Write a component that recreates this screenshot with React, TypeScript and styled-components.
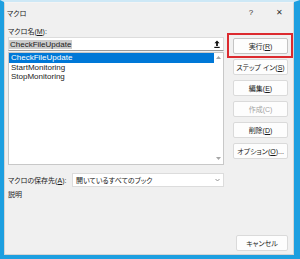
import React from 'react'
import styled, { createGlobalStyle } from 'styled-components'

const GlobalStyle = createGlobalStyle`
    html, body {
        margin: 0;
        padding: 0;
        background: #ffffff;
    }
    body {
        font-family: 'Liberation Sans', 'Noto Sans CJK JP', sans-serif;
        color: #1b1b1b;
    }
`

const Frame = styled.div`
    width: 300px;
    height: 259px;
    box-sizing: border-box;
    border-top: 2px solid #cde8f6;
    border-left: 4px solid #1d9fe0;
    border-right: 6px solid #1d9fe0;
    border-bottom: 4px solid #1d9fe0;
    display: flex;
`

const Dialog = styled.div`
    flex: 1;
    display: flex;
    flex-direction: column;
    background: #f0f0f0;
    border: 1px solid #d4d4d4;
    border-top-color: #f4f4f4;
    font-size: 7px;
    font-feature-settings: 'palt';
`

const TitleBar = styled.div`
    height: 19px;
    display: flex;
    align-items: center;
    padding-left: 2px;
`

const Title = styled.div`
    flex: 1;
`

const TitleButton = styled.div`
    width: 28px;
    height: 19px;
    display: flex;
    align-items: center;
    justify-content: center;
    font-size: 8px;
    color: #333;
`

const Body = styled.div`
    flex: 1;
    display: flex;
    gap: 9px;
    padding: 0 5px 3px 3px;
`

const LeftColumn = styled.div`
    width: 216px;
    display: flex;
    flex-direction: column;
`

const Label = styled.div<{ $top?: number }>`
    height: 10px;
    line-height: 10px;
    margin-top: ${(p) => p.$top ?? 0}px;
    white-space: nowrap;
`

const NameInput = styled.div`
    height: 14px;
    box-sizing: border-box;
    background: #ffffff;
    border: 1px solid #dcdcdc;
    border-bottom-color: #9a9a9a;
    display: flex;
    align-items: center;
    justify-content: space-between;
    padding: 0 3px 0 0;
    font-size: 8px;
`

const Selected = styled.span`
    background: #cccccc;
    padding: 0 1px;
    line-height: 9px;
`

const List = styled.div`
    height: 113px;
    margin-top: 1px;
    box-sizing: border-box;
    background: #ffffff;
    border: 1px solid #c8c8c8;
    display: flex;
    font-size: 8px;
`

const ListItems = styled.div`
    flex: 1;
    display: flex;
    flex-direction: column;
`

const ListItem = styled.div<{ $active?: boolean }>`
    height: 9.5px;
    line-height: 9.5px;
    padding-left: 2px;
    background: ${(p) => (p.$active ? '#0078d7' : 'transparent')};
    color: ${(p) => (p.$active ? '#ffffff' : '#1b1b1b')};
`

const ScrollTrack = styled.div`
    width: 9px;
    display: flex;
    flex-direction: column;
    justify-content: space-between;
    align-items: center;
    padding: 3px 0 4px;
`

const SaveRow = styled.div`
    display: flex;
    align-items: center;
    margin-top: 8px;
    height: 14px;
`

const SaveLabel = styled.div`
    width: 64px;
    white-space: nowrap;
`

const Select = styled.div`
    flex: 1;
    height: 14px;
    box-sizing: border-box;
    background: #ffffff;
    border: 1px solid #dcdcdc;
    display: flex;
    align-items: center;
    padding: 0 3px;
`

const SelectText = styled.div`
    flex: 1;
    white-space: nowrap;
`

const RightColumn = styled.div`
    width: 55px;
    display: flex;
    flex-direction: column;
    gap: 5px;
    padding-top: 16px;
`

const Button = styled.div<{ $primary?: boolean; $disabled?: boolean; $highlight?: boolean }>`
    position: relative;
    height: 16px;
    box-sizing: border-box;
    background: #fdfdfd;
    border: 1px solid ${(p) => (p.$primary ? '#c4c4c4' : '#dadada')};
    border-radius: 2px;
    display: flex;
    align-items: center;
    justify-content: center;
    white-space: nowrap;
    color: ${(p) => (p.$disabled ? '#a3a3a3' : '#1b1b1b')};

    &::after {
        content: '';
        display: ${(p) => (p.$highlight ? 'block' : 'none')};
        position: absolute;
        top: -6px;
        bottom: -5px;
        left: -7px;
        right: -6px;
        border: 2px solid #dc2a2f;
    }
`

const CancelButton = styled(Button)`
    margin-top: auto;
    width: 52px;
    align-self: flex-end;
`

const Arrow = ({ up }: { up?: boolean }) => (
    <svg width="5" height="3" viewBox="0 0 5 3">
        <polygon points={up ? '2.5,0 5,3 0,3' : '0,0 5,0 2.5,3'} fill="#a6a6a6" />
    </svg>
)

const CollapseIcon = () => (
    <svg width="6" height="8" viewBox="0 0 6 8">
        <path d="M3 0.5 L5.6 3.3 H3.9 V6 H2.1 V3.3 H0.4 Z" fill="#111" />
        <rect x="0.3" y="6.8" width="5.4" height="1.2" fill="#111" />
    </svg>
)

const Chevron = () => (
    <svg width="5" height="4" viewBox="0 0 5 4">
        <path d="M0.5 1 L2.5 3 L4.5 1" stroke="#8a8a8a" strokeWidth="0.9" fill="none" />
    </svg>
)

const App = () => {
    const macros = ['CheckFileUpdate', 'StartMonitoring', 'StopMonitoring']
    return (
        <>
            <GlobalStyle />
            <Frame>
                <Dialog>
                    <TitleBar>
                        <Title>マクロ</Title>
                        <TitleButton>?</TitleButton>
                        <TitleButton>✕</TitleButton>
                    </TitleBar>
                    <Body>
                        <LeftColumn>
                            <Label $top={5}>
                                マクロ名(<u>M</u>):
                            </Label>
                            <NameInput>
                                <Selected>CheckFileUpdate</Selected>
                                <CollapseIcon />
                            </NameInput>
                            <List>
                                <ListItems>
                                    {macros.map((m, i) => (
                                        <ListItem key={m} $active={i === 0}>
                                            {m}
                                        </ListItem>
                                    ))}
                                </ListItems>
                                <ScrollTrack>
                                    <Arrow up />
                                    <Arrow />
                                </ScrollTrack>
                            </List>
                            <SaveRow>
                                <SaveLabel>
                                    マクロの保存先(<u>A</u>):
                                </SaveLabel>
                                <Select>
                                    <SelectText>開いているすべてのブック</SelectText>
                                    <Chevron />
                                </Select>
                            </SaveRow>
                            <Label $top={3}>説明</Label>
                        </LeftColumn>
                        <RightColumn>
                            <Button $primary $highlight>
                                実行(<u>R</u>)
                            </Button>
                            <Button>
                                ステップ イン(<u>S</u>)
                            </Button>
                            <Button>
                                編集(<u>E</u>)
                            </Button>
                            <Button $disabled>作成(C)</Button>
                            <Button>
                                削除(<u>D</u>)
                            </Button>
                            <Button>
                                オプション(<u>O</u>)...
                            </Button>
                            <CancelButton>キャンセル</CancelButton>
                        </RightColumn>
                    </Body>
                </Dialog>
            </Frame>
        </>
    )
}

export default App
